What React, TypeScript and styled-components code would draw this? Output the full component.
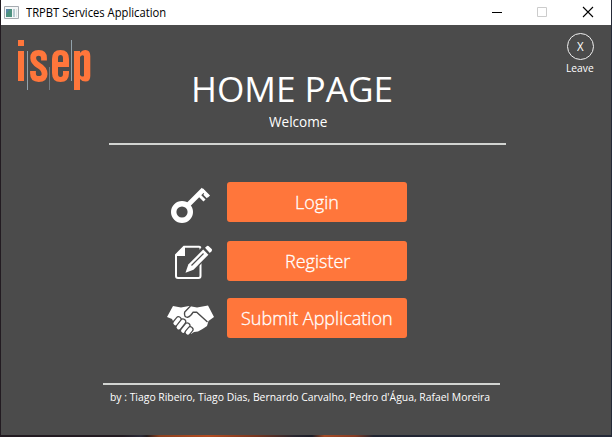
import React from "react";
import styled, { createGlobalStyle } from "styled-components";

const ORANGE = "#ff763b";
const PANEL = "#4b4b4b";

const GlobalStyle = createGlobalStyle`
  * { box-sizing: border-box; }
  html, body { margin: 0; padding: 0; overflow: hidden; }
  body { font-family: "Open Sans", "Noto Sans", sans-serif; }
`;

const Desktop = styled.div`
  width: 612px;
  height: 437px;
  padding: 0 1px 2px;
  background: linear-gradient(90deg, #221b21 0 20%, #2c2b38 23%, #241b1d 24%, #8a401f 26%, #b24b20 34%, #75351f 42%, #29262f 48%, #1c1d27 51%, #a34a25 53%, #843b23 58%, #202431 61%, #252a38 100%);
`;

const Window = styled.div`
  width: 610px;
  height: 435px;
  display: flex;
  flex-direction: column;
  background: ${PANEL};
`;

const TitleBar = styled.header`
  height: 25px;
  display: flex;
  align-items: center;
  background: #fff;
  padding-left: 3px;
`;

const FitText = styled.span<{ $scale?: number }>`
  display: inline-block;
  white-space: nowrap;
  transform: scaleX(${(p) => p.$scale ?? 1});
  transform-origin: left center;
`;

const WindowTitle = styled.span`
  margin-left: 7px;
  flex: 1;
  font-size: 12px;
  line-height: 24px;
  color: #000;
`;

const WindowControls = styled.div`
  display: flex;
  flex: none;
`;

const ControlIcon = styled.svg<{ $width: number }>`
  width: ${(p) => p.$width}px;
  height: 25px;
  display: block;
`;

const Top = styled.section`
  height: 118px;
  display: grid;
  grid-template-columns: 108px 397px 105px;
`;

const Logo = styled.svg`
  width: 80px;
  height: 60px;
  margin: 11px 0 0 13px;
`;

const Heading = styled.div`
  display: flex;
  flex-direction: column;
  align-items: flex-start;
  color: #fff;
`;

const PageTitle = styled.h1`
  margin: 40px 0 0 82px;
  font-size: 35px;
  line-height: 48px;
  font-weight: 400;
`;

const Welcome = styled.p`
  margin: -1px 0 0 160px;
  font-size: 14px;
  line-height: 20px;
`;

const Leave = styled.div`
  padding: 8px 0 0 60px;
  display: flex;
  flex-direction: column;
  color: #fff;
  font-size: 11px;
`;

const LeaveButton = styled.button`
  width: 27px;
  height: 27px;
  margin-left: 1px;
  padding: 0 1px 0 0;
  border: 1px solid #f0f0f0;
  border-radius: 50%;
  background: transparent;
  color: #fff;
  font: 12px/25px "Open Sans", sans-serif;
`;

const LeaveLabel = styled.span`
  line-height: 16px;
`;

const Rule = styled.hr<{ $left: number }>`
  width: 397px;
  height: 2px;
  flex: none;
  margin: 0 0 0 ${(p) => p.$left}px;
  border: 0;
  background: #d2d4d1;
`;

const Menu = styled.nav`
  height: 238px;
  padding: 37px 0 0 164px;
`;

const MenuRow = styled.div<{ $gap: number }>`
  height: 40px;
  display: flex;
  margin-bottom: ${(p) => p.$gap}px;
`;

const RowIcon = styled.svg`
  width: 52px;
  height: 40px;
  margin-right: 10px;
  flex: none;
  overflow: visible;
`;

const ActionButton = styled.button<{ $indent: number }>`
  width: 180px;
  height: 40px;
  padding: 0 0 0 ${(p) => p.$indent}px;
  border: 0;
  border-radius: 3px;
  background: ${ORANGE};
  color: #fff;
  text-align: left;
  white-space: nowrap;
  font: 300 18px/40px "Open Sans", sans-serif;
  -webkit-text-stroke: 0.3px #fff;
`;

const Credits = styled.footer`
  padding: 4px 0 0 109px;
  font-size: 11px;
  line-height: 16px;
  color: #fff;
`;

const AppIcon = () => (
  <svg width="15" height="13" viewBox="0 0 15 13">
    <path d="M.5.5h14v12H.5z" fill="#f5f7f8" stroke="#a6abb0" />
    <path d="M2 3h6v8H2z" fill="#4d917f" />
    <path d="M2 3h4L2 8z" fill="#5786a5" />
    <path d="M9 3h2v8H9z" fill="#b7cbd1" />
    <path d="M12 3h1v8h-1z" fill="#dce2e4" />
  </svg>
);

const IsepLogo = () => (
  <Logo viewBox="14 36 80 60">
    <g stroke="#92a2ab" strokeWidth="1">
      <path d="M27.500 51v39M71.500 40v41" />
      <path d="M49.500 67v23" stroke="#737b81" />
    </g>
    <g fill={ORANGE}>
      <path d="M18 40h6v6h-6zM18 51h6v30h-6z" />
      <path d="M74 51h6v2Q82 50 85.500 50 90.300 50 90.300 56V76Q90.300 81.500 85.500 81.500 82 81.500 80 79V90H74ZM80 57V75Q82 77.500 84 76V56Q82 54 80 57Z" fillRule="evenodd" />
      <path d="M52 59Q52 50 60.500 50 69 50 69 59V67H58V74Q58 77 60.500 77 63 77 63 74V71H69V73Q69 82 60.500 82 52 82 52 73ZM58 62H63V58Q63 55 60.500 55 58 55 58 58Z" fillRule="evenodd" />
    </g>
    <path d="M44 60.500V58Q44 52.800 38.700 52.800 33.200 52.800 33.200 58 33.200 62 38.700 65.500 44.600 69 44.600 74 44.600 79 38.700 79 33 79 33 73.500V71" fill="none" stroke={ORANGE} strokeWidth="5.800" />
  </Logo>
);

const KeyIcon = () => (
  <RowIcon viewBox="165 182 52 40" fill="none" stroke="#fff">
    <circle cx="182" cy="212" r="8.300" strokeWidth="5.400" />
    <path d="M187.500 205.500 203.500 189.500" strokeWidth="4.800" />
    <path d="M202 189.500 209 196.500M199 195l5.500 5.500" strokeWidth="3" />
    <path d="M204 194l3.500 3.500" strokeWidth="2" />
  </RowIcon>
);

const NoteIcon = () => (
  <RowIcon viewBox="165 241 52 40">
    <path d="M184 246.800H199Q200.500 246.800 200.500 248.500V276Q200.500 278 198.500 278H178Q176 278 176 276V255Z" fill="none" stroke="#fff" strokeWidth="2" />
    <path d="M185 246v10h-10z" fill="#fff" />
    <path d="M183 275 187.500 261.500 203 246 211 254 195.500 269.500Z" fill={PANEL} />
    <path d="M185.500 272.800 188.300 264.500 203.200 249.600 208.400 254.800 193.500 269.700Z" fill="#fff" />
    <path d="m205 247.800 2-1.700q1-.7 2 .3l2.700 2.700q1 1-.2 2.200l-1.700 1.600z" fill="#fff" />
    <path d="M191.500 265.500 203.500 253.500" stroke={PANEL} strokeWidth="1.200" />
  </RowIcon>
);

const FINGERS = [
  "M178.500 319.500 175.500 323.200",
  "M183 321.700 178.700 327.300",
  "M187.200 325.700 183.200 330.700",
  "M190.300 329.500 187.800 332.500",
];

const HandshakeIcon = () => (
  <RowIcon viewBox="165 298 52 40">
    <path d="M173 306 181 307.500 189 306 197 307.500 208 305.500 214 317 208.500 321 207 326 202.500 329 198 331.500 194 332 191 334 184 330 174 323 172 319 167 317Z" fill="#fff" />
    <path d="M190.500 306 184.700 312Q183.500 317.500 188 317.200 190.500 316.500 193.200 312.200H196.700L207.500 322" fill="none" stroke={PANEL} strokeWidth="1.400" />
    <g strokeLinecap="round">
      {FINGERS.map((finger) => (
        <g key={finger}>
          <path d={finger} stroke={PANEL} strokeWidth="6.600" />
          <path d={finger} stroke="#fff" strokeWidth="4.200" />
        </g>
      ))}
    </g>
  </RowIcon>
);

export default function App() {
  return (
    <>
      <GlobalStyle />
      <Desktop>
        <Window>
          <TitleBar>
            <AppIcon />
            <WindowTitle><FitText $scale={0.935}>TRPBT Services Application</FitText></WindowTitle>
            <WindowControls>
              <ControlIcon $width={49} viewBox="473 0 49 25"><path d="M492 12.500h10" stroke="#000" /></ControlIcon>
              <ControlIcon $width={49} viewBox="522 0 49 25"><path d="M537.500 7.500h9v9h-9z" fill="none" stroke="#ccc" /></ControlIcon>
              <ControlIcon $width={40} viewBox="571 0 40 25"><path d="m583 7 10 10m0-10-10 10" stroke="#000" strokeWidth="1.100" /></ControlIcon>
            </WindowControls>
          </TitleBar>
          <Top>
            <IsepLogo />
            <Heading>
              <PageTitle><FitText $scale={1.005}>HOME PAGE</FitText></PageTitle>
              <Welcome><FitText $scale={0.97}>Welcome</FitText></Welcome>
            </Heading>
            <Leave>
              <LeaveButton><FitText $scale={0.95}>X</FitText></LeaveButton>
              <LeaveLabel><FitText $scale={0.93}>Leave</FitText></LeaveLabel>
            </Leave>
          </Top>
          <Rule $left={108} />
          <Menu>
            <MenuRow $gap={19}><KeyIcon /><ActionButton $indent={68}><FitText>Login</FitText></ActionButton></MenuRow>
            <MenuRow $gap={17}><NoteIcon /><ActionButton $indent={58}><FitText>Register</FitText></ActionButton></MenuRow>
            <MenuRow $gap={0}><HandshakeIcon /><ActionButton $indent={14}><FitText>Submit Application</FitText></ActionButton></MenuRow>
          </Menu>
          <Rule $left={102} />
          <Credits><FitText $scale={0.943}>by : Tiago Ribeiro, Tiago Dias, Bernardo Carvalho, Pedro d'Água, Rafael Moreira</FitText></Credits>
        </Window>
      </Desktop>
    </>
  );
}
